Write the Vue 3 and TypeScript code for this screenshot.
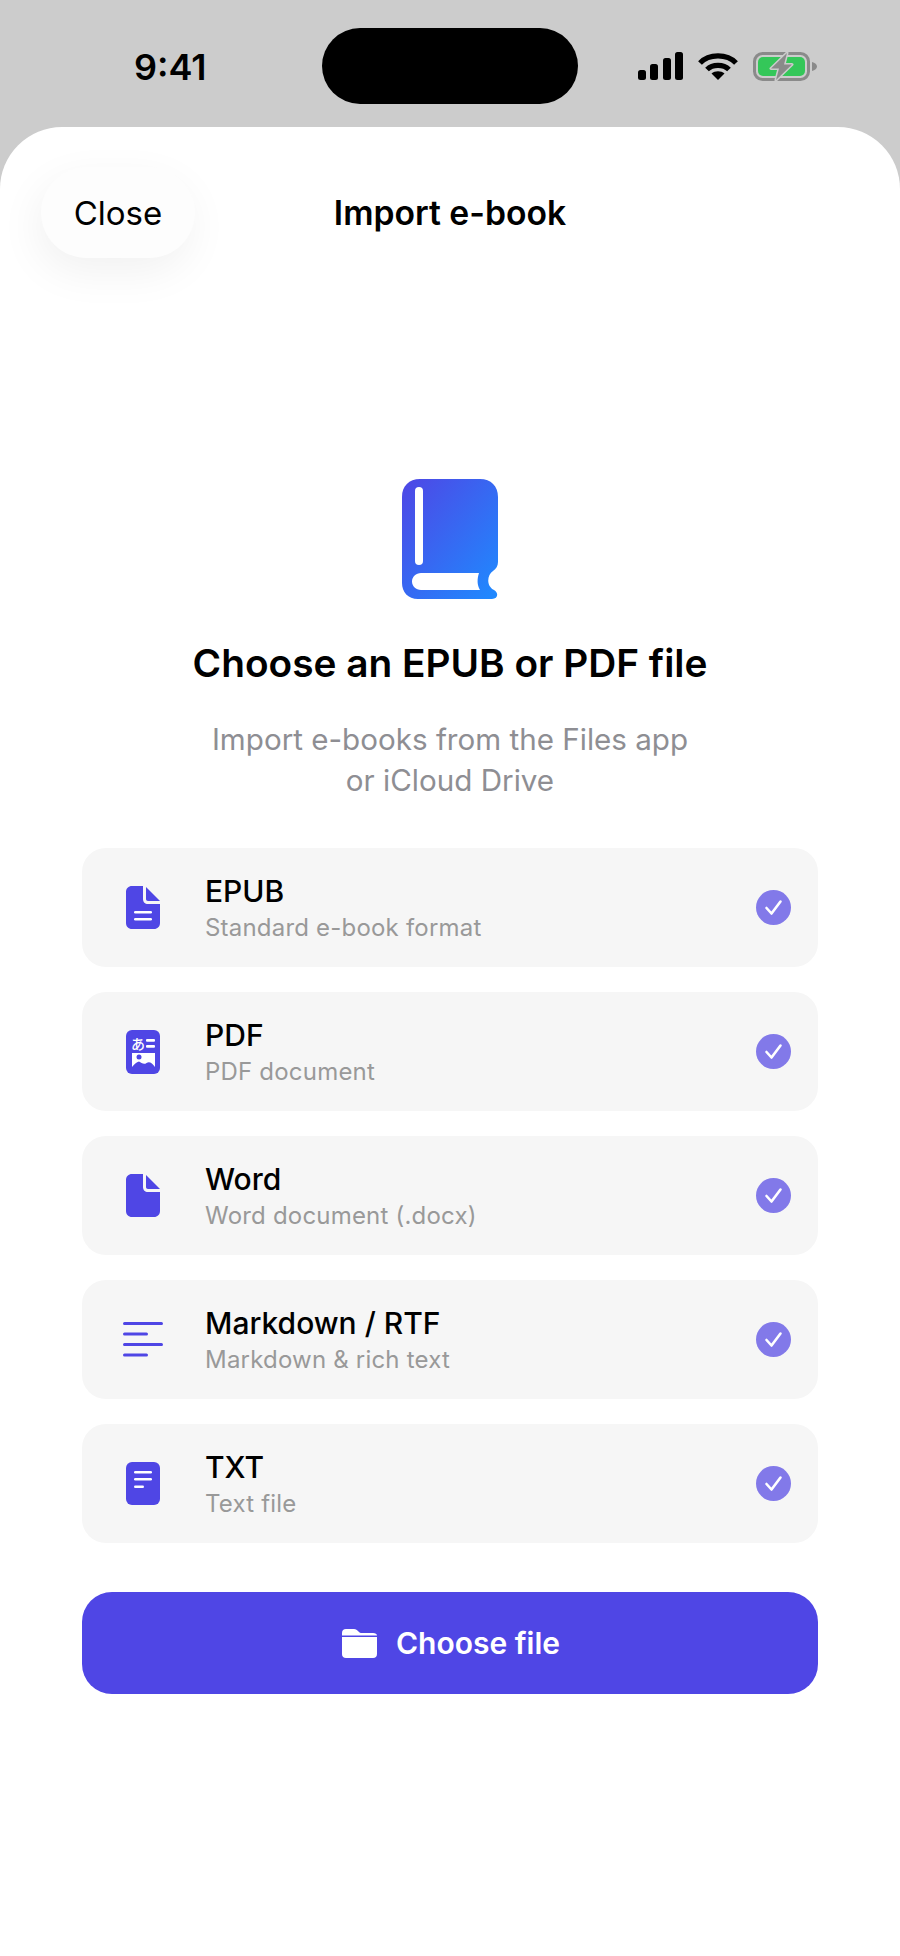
<template>
  <div class="screen">
    <div class="status-bar">
      <span class="time">9:41</span>
      <div class="island"></div>
      <div class="status-icons">
        <svg class="signal" width="45" height="28" viewBox="0 0 45 28" fill="#000">
          <rect x="0" y="18" width="8" height="10" rx="2.5" />
          <rect x="12" y="12" width="8" height="16" rx="2.5" />
          <rect x="25" y="6" width="8" height="22" rx="2.5" />
          <rect x="37" y="0" width="8" height="28" rx="2.5" />
        </svg>
        <svg class="wifi" width="40" height="28" viewBox="0 0 40 28" fill="none" stroke="#000" stroke-width="5.2">
          <path d="M2 11 C11 1.5 29 1.5 38 11" />
          <path d="M9 17.5 C14.500 12 25.500 12 31 17.500" />
          <path d="M20 28 L13.500 21.500 C17 18.500 23 18.500 26.500 21.500 Z" fill="#000" stroke="none" />
        </svg>
        <svg class="battery" width="64" height="29" viewBox="0 0 64 29">
          <rect x="1.500" y="1.500" width="54" height="26" rx="8" fill="none" stroke="#8a8a8a" stroke-width="3" />
          <rect x="5" y="5" width="47" height="19" rx="5" fill="#34c759" />
          <path d="M59 10 C62 10.500 64 12.500 64 14.500 C64 16.500 62 18.500 59 19 Z" fill="#8a8a8a" />
          <path class="bolt" d="M34 1 L18 16.500 H26 L23 28 L39 12.500 H31 Z" />
        </svg>
      </div>
    </div>

    <div class="sheet">
      <div class="nav">
        <button class="close-btn">Close</button>
        <span class="nav-title">Import e-book</span>
        <span></span>
      </div>

      <div class="hero">
        <svg class="book" width="96" height="120" viewBox="0 0 96 120">
          <defs>
            <linearGradient id="bookGrad" x1="0" y1="0" x2="1" y2="1">
              <stop offset="0" stop-color="#4f46e5" />
              <stop offset="1" stop-color="#1e8bff" />
            </linearGradient>
          </defs>
          <path d="M18 0 H78 C89 0 96 7 96 18 V83 C96 87 94 90 91 92 C85 96 84 107 92 111 C97 114 96 120 90 120 H16 C6 120 0 113 0 104 V18 C0 7 7 0 18 0 Z" fill="url(#bookGrad)" />
          <rect x="13" y="8" width="8" height="78" rx="4" fill="#fff" />
          <path d="M19 94 H77 C75 100 75 106 78 111 H19 C14 111 10 107 10 102.500 C10 98 14 94 19 94 Z" fill="#fff" />
        </svg>
        <h1 class="headline">Choose an EPUB or PDF file</h1>
        <p class="subtitle">Import e-books from the Files app<br />or iCloud Drive</p>
      </div>

      <ul class="formats">
        <li v-for="item in formats" :key="item.name" class="format-row">
          <div class="format-icon">
            <svg v-if="item.icon === 'epub'" width="34" height="43" viewBox="0 0 34 43">
              <path d="M6 0 H17 V13 C17 16 19 18 22 18 H34 V37 C34 40.500 31.500 43 28 43 H6 C2.500 43 0 40.500 0 37 V6 C0 2.500 2.500 0 6 0 Z" fill="#4f46e5" />
              <path d="M20 1 L34 15 H22 C20.800 15 20 14.200 20 13 Z" fill="#4f46e5" />
              <rect x="8" y="25" width="18" height="2.600" rx="1.300" fill="#fff" />
              <rect x="8" y="32" width="18" height="2.600" rx="1.300" fill="#fff" />
            </svg>
            <svg v-else-if="item.icon === 'pdf'" width="34" height="44" viewBox="0 0 34 44">
              <rect width="34" height="44" rx="6" fill="#4f46e5" />
              <text x="5" y="19" class="kana">あ</text>
              <rect x="20" y="9" width="9" height="2.800" rx="1" fill="#fff" />
              <rect x="20" y="15" width="9" height="2.800" rx="1" fill="#fff" />
              <path d="M6 23 H29 V37 C26 33 23.500 31 20.500 33 C18 35 15.500 33 13 31.500 C10.500 32 8 34.500 6 37 Z" fill="#fff" />
              <circle cx="13" cy="27" r="2.500" fill="#4f46e5" />
            </svg>
            <svg v-else-if="item.icon === 'word'" width="34" height="43" viewBox="0 0 34 43">
              <path d="M6 0 H17 V13 C17 16 19 18 22 18 H34 V37 C34 40.500 31.500 43 28 43 H6 C2.500 43 0 40.500 0 37 V6 C0 2.500 2.500 0 6 0 Z" fill="#4f46e5" />
              <path d="M20 1 L34 15 H22 C20.800 15 20 14.200 20 13 Z" fill="#4f46e5" />
            </svg>
            <svg v-else-if="item.icon === 'markdown'" width="40" height="36" viewBox="0 0 40 36" fill="#4f46e5">
              <rect y="0" width="40" height="3" rx="1.500" />
              <rect y="10.500" width="25" height="3" rx="1.500" />
              <rect y="21" width="40" height="3" rx="1.500" />
              <rect y="31.500" width="25" height="3" rx="1.500" />
            </svg>
            <svg v-else width="34" height="43" viewBox="0 0 34 43">
              <rect width="34" height="43" rx="6" fill="#4f46e5" />
              <rect x="8" y="9" width="18" height="2.600" rx="1.300" fill="#fff" />
              <rect x="8" y="16" width="18" height="2.600" rx="1.300" fill="#fff" />
              <rect x="8" y="23.500" width="10" height="2.600" rx="1.300" fill="#fff" />
            </svg>
          </div>
          <div class="format-text">
            <span class="format-name">{{ item.name }}</span>
            <span class="format-desc">{{ item.desc }}</span>
          </div>
          <svg class="check" width="35" height="35" viewBox="0 0 35 35">
            <circle cx="17.500" cy="17.500" r="17.500" fill="#8279e9" />
            <path d="M10.500 18 L15.500 23.500 L24.500 11.500" fill="none" stroke="#fff" stroke-width="2.600" stroke-linecap="round" stroke-linejoin="round" />
          </svg>
        </li>
      </ul>

      <button class="choose-btn">
        <svg width="35" height="29" viewBox="0 0 35 29" fill="#fff">
          <path d="M4 0 H12 C14 0 15 1 16.500 2.500 C17.500 3.500 18.500 4 20 4 H31 C33.500 4 35 5 35 6.500 H0 V4 C0 1.500 1.500 0 4 0 Z" />
          <path d="M0 8 H35 V25 C35 27.500 33.500 29 31 29 H4 C1.500 29 0 27.500 0 25 Z" />
        </svg>
        <span>Choose file</span>
      </button>
    </div>
  </div>
</template>

<script setup lang="ts">
interface FormatItem {
  name: string
  desc: string
  icon: 'epub' | 'pdf' | 'word' | 'markdown' | 'txt'
}

const formats: FormatItem[] = [
  { name: 'EPUB', desc: 'Standard e-book format', icon: 'epub' },
  { name: 'PDF', desc: 'PDF document', icon: 'pdf' },
  { name: 'Word', desc: 'Word document (.docx)', icon: 'word' },
  { name: 'Markdown / RTF', desc: 'Markdown & rich text', icon: 'markdown' },
  { name: 'TXT', desc: 'Text file', icon: 'txt' }
]
</script>

<style>
html,
body {
  margin: 0;
  background: #cccccc;
}
</style>

<style scoped>
.screen {
  width: 900px;
  height: 1956px;
  overflow: hidden;
  display: flex;
  flex-direction: column;
  background: #cccccc;
  font-family: Inter, 'Noto Sans', sans-serif;
  color: #000;
}

.status-bar {
  height: 127px;
  flex-shrink: 0;
  position: relative;
}

.time {
  position: absolute;
  left: 134px;
  top: 46px;
  font-size: 36px;
  line-height: 42px;
  font-weight: 600;
}

.island {
  position: absolute;
  left: 322px;
  top: 28px;
  width: 256px;
  height: 76px;
  border-radius: 38px;
  background: #000;
}

.status-icons {
  position: absolute;
  left: 638px;
  top: 52px;
  display: flex;
  gap: 15px;
}

.bolt {
  fill: #8a8a8a;
  stroke: #cccccc;
  stroke-width: 3;
  stroke-linejoin: round;
  paint-order: stroke;
}

.sheet {
  flex: 1;
  background: #fff;
  border-radius: 62px 62px 0 0;
  padding: 40px 82px 0;
  display: flex;
  flex-direction: column;
}

.nav {
  display: grid;
  grid-template-columns: 1fr auto 1fr;
  align-items: center;
  margin: 0 -41px;
}

.close-btn {
  justify-self: start;
  width: 154px;
  height: 91px;
  border: none;
  border-radius: 46px;
  background: #fdfdfd;
  box-shadow: -4px 14px 44px rgba(0, 0, 0, 0.06);
  font: inherit;
  font-size: 33px;
  color: #000;
}

.nav-title {
  font-size: 33.7px;
  font-weight: 600;
}

.hero {
  display: flex;
  flex-direction: column;
  align-items: center;
  padding-top: 221px;
}

.book {
  display: block;
}

.headline {
  margin: 41px 0 0;
  font-size: 38.8px;
  line-height: 46px;
  font-weight: 600;
  text-align: center;
}

.subtitle {
  margin: 33px 0 0;
  font-size: 29.6px;
  line-height: 41px;
  color: #8e8e93;
  text-align: center;
}

.formats {
  list-style: none;
  margin: 47px 0 0;
  padding: 0;
  display: flex;
  flex-direction: column;
  gap: 25px;
}

.format-row {
  height: 119px;
  box-sizing: border-box;
  display: flex;
  align-items: center;
  padding: 0 27px 0 39px;
  background: #f6f6f6;
  border-radius: 24px;
}

.format-icon {
  width: 44px;
  display: flex;
  justify-content: center;
  flex-shrink: 0;
}

.format-icon svg {
  display: block;
}

.kana {
  font-family: 'Noto Sans CJK JP', sans-serif;
  font-size: 14px;
  font-weight: 500;
  fill: #fff;
}

.format-text {
  flex: 1;
  margin-left: 40px;
  display: flex;
  flex-direction: column;
}

.format-name {
  font-size: 30px;
  line-height: 36px;
  font-weight: 450;
  position: relative;
  top: 1px;
}

.format-desc {
  margin-top: 5px;
  font-size: 24px;
  line-height: 30px;
  letter-spacing: 0.2px;
  color: #999999;
}

.check {
  flex-shrink: 0;
}

.choose-btn {
  margin-top: 49px;
  height: 102px;
  border: none;
  border-radius: 30px;
  padding: 0 0 0 2px;
  background: #4f46e5;
  color: #fff;
  font: inherit;
  font-size: 30px;
  font-weight: 600;
  display: flex;
  align-items: center;
  justify-content: center;
  gap: 19px;
}
</style>
